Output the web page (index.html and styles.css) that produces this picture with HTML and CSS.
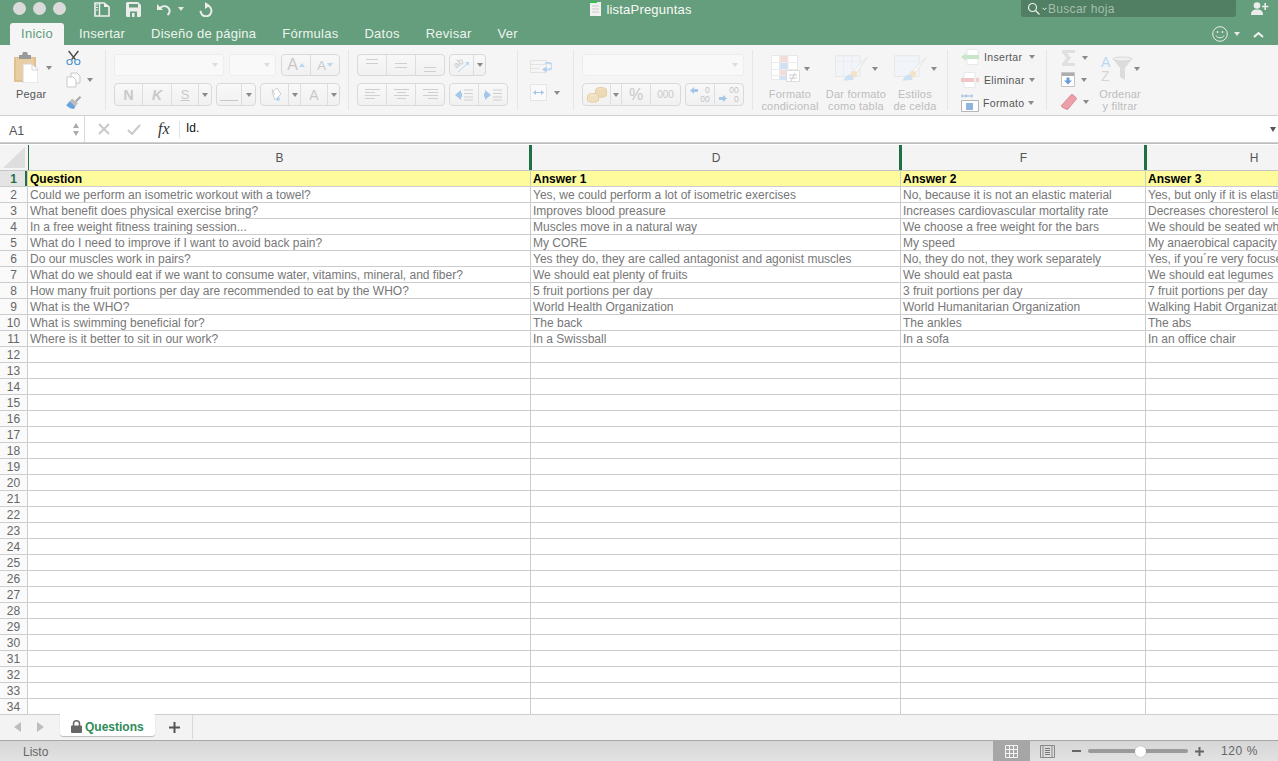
FILE: index.html
```html
<!DOCTYPE html>
<html lang="es">
<head>
<meta charset="utf-8">
<title>listaPreguntas</title>
<link rel="stylesheet" href="styles.css">
</head>
<body>
<div class="app">
  <header class="titlebar">
    <div class="tb-top">
      <div class="tb-left">
        <span class="light"></span><span class="light"></span><span class="light"></span>
        <svg class="qa qa-doc" width="16" height="15" viewBox="0 0 16 15"><path d="M1 1h9l5 4v9H1z" fill="none" stroke="#f0f0f0" stroke-width="1.6"/><path d="M5.500 1v13" stroke="#f0f0f0" stroke-width="1.400"/><path d="M10 1v4h5z" fill="#f0f0f0"/><path d="M2 3h2M2 5.500h2M2 8h2" stroke="#f0f0f0"/></svg>
        <svg class="qa qa-save" width="15" height="15" viewBox="0 0 15 15"><path d="M1.500 0h10.500l3 3v10.500a1.500 1.500 0 0 1-1.500 1.500h-12a1.500 1.500 0 0 1-1.500-1.500v-12a1.500 1.500 0 0 1 1.500-1.500z" fill="#ececec"/><path d="M3 2h9v3.500H3z" fill="#659e7c"/><path d="M4 9.500h7V15H4z" fill="#659e7c"/><path d="M6 11h2.500v4H6z" fill="#ececec"/></svg>
        <svg class="qa qa-undo" width="16" height="13" viewBox="0 0 16 13"><path d="M1 1v6h6z" fill="#ececec"/><path d="M3.500 5.500c2.500-2.500 6-3 8.500-1 2.500 2.200 2 5.500-.5 7.500" fill="none" stroke="#ececec" stroke-width="2"/></svg>
        <span class="caret caret-light qa-caret"></span>
        <svg class="qa qa-redo" width="14" height="15" viewBox="0 0 14 15"><path d="M6 0l5 3.500-5 3.500z" fill="#ececec"/><path d="M7 3.300a5.500 5.500 0 1 1-5.500 5.500" fill="none" stroke="#ececec" stroke-width="2"/></svg>
      </div>
      <div class="tb-title">
        <svg width="11" height="15" viewBox="0 0 11 15"><path d="M0 1h11v14H0z" fill="#f1f1f1"/><path d="M0 0h7v2H0z" fill="#2fbf4a"/><path d="M2 5h7M2 8h7M2 11h7" stroke="#c9c9c9"/></svg>
        <span>listaPreguntas</span>
      </div>
      <div class="tb-right">
        <div class="search">
          <svg width="13" height="13" viewBox="0 0 13 13"><circle cx="5.500" cy="5.500" r="4" fill="none" stroke="#f0f0f0" stroke-width="1.200"/><path d="M8.500 8.500l4 4" stroke="#f0f0f0" stroke-width="1.300"/></svg>
          <svg class="search-chev" width="5" height="4" viewBox="0 0 5 4"><path d="M.5 .8l2 2 2-2" fill="none" stroke="#f0f0f0"/></svg>
          <span>Buscar hoja</span>
        </div>
        <svg class="person" width="18" height="13" viewBox="0 0 18 13"><circle cx="6" cy="3.500" r="3.300" fill="#ececec"/><path d="M0 13c0-4 2-5.500 6-5.500s6 1.500 6 5.500z" fill="#ececec"/><path d="M11 4.500h6.500M14.200 1v7" stroke="#ececec" stroke-width="1.600"/></svg>
      </div>
    </div>
    <nav class="tb-tabs">
      <span class="rtab rtab-active">Inicio</span>
      <span class="rtab rtab-ins">Insertar</span>
      <span class="rtab">Diseño de página</span>
      <span class="rtab">Fórmulas</span>
      <span class="rtab">Datos</span>
      <span class="rtab">Revisar</span>
      <span class="rtab">Ver</span>
      <span class="tabs-end">
        <svg width="16" height="16" viewBox="0 0 16 16"><circle cx="8" cy="8" r="7.300" fill="none" stroke="#ececec" stroke-width="1"/><circle cx="5.500" cy="6" r=".9" fill="#ececec"/><circle cx="10.500" cy="6" r=".9" fill="#ececec"/><path d="M4 9.500c1 3 7 3 8 0" fill="none" stroke="#ececec"/></svg>
        <span class="caret caret-light smile-caret"></span>
        <svg class="chev-up" width="11" height="7" viewBox="0 0 11 7"><path d="M1 6l4.500-4 4.500 4" fill="none" stroke="#f4f4f4" stroke-width="2"/></svg>
      </span>
    </nav>
  </header>

  <section class="ribbon">
    <div class="grp g-paste">
      <div class="paste">
        <div class="paste-icon">
          <svg width="24" height="31" viewBox="0 0 24 31"><path d="M0 5h22v25H0z" fill="#e3c08f"/><path d="M2 6h18v22H2z" fill="#e9cda3"/><path d="M5 3h3l1-3h4l1 3h3v4H5z" fill="#9a9a9a"/><path d="M9 12h9l6 6v13H9z" fill="#fff" stroke="#d5d5d5"/><path d="M18 12v6h6" fill="none" stroke="#d5d5d5"/></svg>
          <span class="caret"></span>
        </div>
        <span class="paste-label">Pegar</span>
      </div>
      <div class="clip">
        <svg width="15" height="16" viewBox="0 0 15 16"><path d="M2.500 1l7 9M12.500 1l-7 9" stroke="#4a4a4a" stroke-width="1.500"/><circle cx="3.500" cy="12.500" r="2.700" fill="none" stroke="#4f93d2" stroke-width="1.200"/><circle cx="11.500" cy="12.500" r="2.700" fill="none" stroke="#4f93d2" stroke-width="1.200"/></svg>
        <span class="clip-copy"><svg width="15" height="16" viewBox="0 0 15 16"><path d="M5 1h6l3 3v7H5z" fill="#fafafa" stroke="#c9c9c9"/><path d="M1 5h6l3 3v7H1z" fill="#fff" stroke="#c9c9c9"/></svg><span class="caret"></span></span>
        <svg width="16" height="15" viewBox="0 0 16 15"><path d="M9 6l5-5 1.500 1.500-5 5z" fill="#a8a8a8"/><path d="M6 3.500l6 5-2.500 3-6-5z" fill="#bdbdbd"/><path d="M3.500 6.500l6 5-1.500 3c-3 0-6-1.500-8-4z" fill="#6aa3dc"/></svg>
      </div>
    </div>

    <div class="grp g-font">
      <div class="rw">
        <div class="field f-font"><span class="caret caret-pale"></span></div>
        <div class="field f-size"><span class="caret caret-pale"></span></div>
        <div class="seg">
          <span class="cell w-29 big-a">A<i class="tri-up"></i></span>
          <span class="cell w-28 small-a">A<i class="tri-down"></i></span>
        </div>
      </div>
      <div class="rw">
        <div class="seg">
          <span class="cell w-28 ltr ltr-n">N</span>
          <span class="cell w-29 ltr ltr-k">K</span>
          <span class="cell w-27 ltr ltr-s">S</span>
          <span class="cell w-12"><span class="caret"></span></span>
        </div>
        <div class="seg">
          <span class="cell w-25"><i class="border-ic"></i></span>
          <span class="cell w-13"><span class="caret"></span></span>
        </div>
        <div class="seg">
          <span class="cell w-28">
            <svg width="14" height="15" viewBox="0 0 14 15"><path d="M4 5l5-4 4 6-6 6z" fill="#fff" stroke="#cfcfcf"/><path d="M4 2l3 6" stroke="#cfcfcf"/><circle cx="10" cy="12" r="2" fill="#b9d4ee"/></svg>
          </span>
          <span class="cell w-12"><span class="caret"></span></span>
          <span class="cell w-27 font-a">A</span>
          <span class="cell w-11"><span class="caret"></span></span>
        </div>
      </div>
    </div>

    <div class="grp g-align">
      <div class="rw">
        <div class="seg">
          <span class="cell w-29"><i class="lines lines-top"></i></span>
          <span class="cell w-29"><i class="lines lines-mid"></i></span>
          <span class="cell w-28"><i class="lines lines-bot"></i></span>
        </div>
        <div class="seg">
          <span class="cell w-24">
            <svg class="over" width="17" height="15" viewBox="0 0 17 15"><text class="ab" x="2" y="9" transform="rotate(-40 5 8)">ab</text><path d="M5 14l10-9" stroke="#b9d4ee"/><path d="M12 4h4v4z" fill="#b9d4ee"/></svg>
          </span>
          <span class="cell w-11"><span class="caret"></span></span>
        </div>
      </div>
      <div class="rw">
        <div class="seg">
          <span class="cell w-29"><svg class="ln" width="15" height="11" viewBox="0 0 15 11"><path d="M0 .5h15M0 3.500h10M0 6.500h15M0 9.500h10"/></svg></span>
          <span class="cell w-29"><svg class="ln" width="15" height="11" viewBox="0 0 15 11"><path d="M0 .5h15M3 3.500h9M0 6.500h15M3 9.500h9"/></svg></span>
          <span class="cell w-28"><svg class="ln" width="15" height="11" viewBox="0 0 15 11"><path d="M0 .5h15M5 3.500h10M0 6.500h15M5 9.500h10"/></svg></span>
        </div>
        <div class="seg">
          <span class="cell w-29"><svg width="18" height="12" viewBox="0 0 18 12"><path d="M0 6l6-5v3h1v4H6v3z" fill="#a5c8ea"/><path d="M9 1h9M9 4.500h9M9 8h9M9 11h9" stroke="#cfcfcf"/></svg></span>
          <span class="cell w-28"><svg width="18" height="12" viewBox="0 0 18 12"><path d="M7 6L1 1v3H0v4h1v3z" fill="#a5c8ea"/><path d="M9 1h9M9 4.500h9M9 8h9M9 11h9" stroke="#cfcfcf"/></svg></span>
        </div>
      </div>
    </div>

    <div class="grp g-wrap">
      <svg class="wrap-ic" width="22" height="13" viewBox="0 0 22 13"><path d="M.5.500h16v12H.5zM.5 4.500h16M.5 8.500h9" fill="none" stroke="#e2e2e2"/><path d="M15 3h4a2.500 2.500 0 0 1 0 6.500h-3" fill="none" stroke="#bfd8f0" stroke-width="2"/><path d="M12 9.500l4.500-3v6z" fill="#b0cfec"/></svg>
      <div class="merge">
        <svg width="17" height="17" viewBox="0 0 17 17"><path d="M.5.500h16v16H.5z" fill="#fafafa" stroke="#e4e4e4"/><path d="M3 8.500h11" stroke="#a5c8ea"/><path d="M3 8.500l3-2.500v5zM14 8.500l-3-2.500v5z" fill="#a5c8ea"/></svg>
        <span class="caret"></span>
      </div>
    </div>

    <div class="grp g-num">
      <div class="rw">
        <div class="field f-num"><span class="caret caret-pale"></span></div>
      </div>
      <div class="rw">
        <div class="seg">
          <span class="cell w-28"><svg width="20" height="16" viewBox="0 0 20 16"><ellipse cx="14" cy="3" rx="5.500" ry="2.500" fill="#f0e0c0" stroke="#e2cfa6"/><path d="M8.500 3v5c0 3 11 3 11 0V3" fill="#eddab4" stroke="#e2cfa6"/><ellipse cx="6" cy="9" rx="5.500" ry="2.500" fill="#f3e5ca" stroke="#e2cfa6"/><path d="M.5 9v4c0 3 11 3 11 0V9" fill="#f0e0c0" stroke="#e2cfa6"/></svg></span>
          <span class="cell w-11"><span class="caret"></span></span>
          <span class="cell w-29 pct">%</span>
          <span class="cell w-29 thou">000</span>
        </div>
        <div class="seg">
          <span class="cell w-29 dec">
            <svg class="dec-top" width="8" height="7" viewBox="0 0 8 7"><path d="M0 3.500L4 0v2h4v3H4v2z" fill="#a5c8ea"/></svg>
            <b>0<br>00</b>
          </span>
          <span class="cell w-28 dec">
            <svg class="dec-bot" width="8" height="7" viewBox="0 0 8 7"><path d="M8 3.500L4 0v2H0v3h4v2z" fill="#a5c8ea"/></svg>
            <b>00<br>0</b>
          </span>
        </div>
      </div>
    </div>

    <div class="grp g-styles">
      <div class="style s-cond">
        <div class="style-ic">
          <svg width="29" height="27" viewBox="0 0 29 27"><path d="M.5.500h26v24H.5z" fill="#fff" stroke="#e8e8e8"/><path d="M8 1h9v6H8z" fill="#f5dada"/><path d="M8 7h9v7H8z" fill="#cfe1f3"/><path d="M8 14h19v6H8z" fill="#f5dada"/><path d="M8 20h9v5H8z" fill="#cfe1f3"/><path d="M.5 7.500h26M.5 14.500h26M.5 20.500h26M9 .5v24M17 .5v24" fill="none" stroke="#ececec"/><path d="M15.500 15.500h13v11h-13z" fill="#fff" stroke="#dcdcdc"/><path d="M18 20h8M18 23h8M24 18l-4 8" stroke="#cbcbcb"/></svg>
          <span class="caret"></span>
        </div>
        <span class="style-lb">Formato<br>condicional</span>
      </div>
      <div class="style s-tab">
        <div class="style-ic">
          <svg width="33" height="27" viewBox="0 0 35 28"><path d="M.5.500h26v22H.5z" fill="#f1f5fa" stroke="#e6e6e6"/><path d="M.5 6.500h26M9 .5v22M18 .5v22" fill="none" stroke="#ececec"/><path d="M34 2L20 16l3 3z" fill="#f8f8f8" stroke="#e4e4e4"/><circle cx="20" cy="20" r="3.500" fill="#f3e3c9"/><path d="M9 27c2-5 5-7 9-6l2 5z" fill="#cde0f4"/></svg>
          <span class="caret"></span>
        </div>
        <span class="style-lb">Dar formato<br>como tabla</span>
      </div>
      <div class="style s-cel">
        <div class="style-ic">
          <svg width="33" height="27" viewBox="0 0 35 28"><path d="M.5.500h26v22H.5z" fill="#f1f5fa" stroke="#e6e6e6"/><path d="M.5 6.500h26" fill="none" stroke="#ececec"/><path d="M34 2L20 16l3 3z" fill="#f8f8f8" stroke="#e4e4e4"/><circle cx="20" cy="20" r="3.500" fill="#f3e3c9"/><path d="M9 27c2-5 5-7 9-6l2 5z" fill="#cde0f4"/></svg>
          <span class="caret"></span>
        </div>
        <span class="style-lb">Estilos<br>de celda</span>
      </div>
    </div>

    <div class="grp g-cells">
      <div class="cellrow">
        <svg width="19" height="16" viewBox="0 0 19 16"><path d="M6 .5h11v15H6z" fill="#fff" stroke="#e8e8e8"/><path d="M0 8l5-4v2h13v4H5v2z" fill="#c8e6c8"/></svg>
        <span class="cell-lb">Insertar</span><span class="caret"></span>
      </div>
      <div class="cellrow">
        <svg width="19" height="16" viewBox="0 0 19 16"><path d="M3 .5h11v15H3z" fill="#fff" stroke="#e8e8e8"/><path d="M0 6h13v4H0z" fill="#f0c6c6"/><path d="M15 6l3 4M18 6l-3 4" stroke="#f0c6c6" stroke-width="1.300"/></svg>
        <span class="cell-lb">Eliminar</span><span class="caret"></span>
      </div>
      <div class="cellrow">
        <svg class="fmt-ic" width="18" height="18" viewBox="0 0 18 18"><path d="M.5 6.500h17v11H.5z" fill="#fff" stroke="#b5b5b5"/><path d="M5 9h7v7H5z" fill="#8fb5de"/><path d="M1 2h10M1 .5v3M11 .5v3M5 .5v3" stroke="#8fb5de"/></svg>
        <span class="cell-lb">Formato</span><span class="caret"></span>
      </div>
    </div>

    <div class="grp g-edit">
      <div class="edit-col">
        <span class="edit-it"><svg width="15" height="16" viewBox="0 0 15 16"><path d="M1 0h13v3H6l4 5-4 5h8v3H1v-2.500L5.500 8 1 2.500z" fill="#e0e0e0"/></svg><span class="caret"></span></span>
        <span class="edit-it"><svg width="14" height="15" viewBox="0 0 14 15"><path d="M.5.500h13v14H.5z" fill="#fff" stroke="#c4c4c4"/><path d="M1 1h12v3H1z" fill="#aeaeae"/><path d="M5.500 5.500h3v3H11l-4 4-4-4h2.500z" fill="#6a9cdb"/></svg><span class="caret"></span></span>
        <span class="edit-it"><svg width="16" height="16" viewBox="0 0 16 16"><path d="M1 11L10 1a1.500 1.500 0 0 1 2 0l3 2.500a1.500 1.500 0 0 1 0 2L7 15a1.500 1.500 0 0 1-2 0L1 13a1.500 1.500 0 0 1 0-2z" fill="#eea0a8" stroke="#d98b94"/></svg><span class="caret"></span></span>
      </div>
      <div class="style s-sort">
        <div class="style-ic">
          <svg class="over" width="33" height="29" viewBox="0 0 33 29"><text class="az az-a" x="1" y="13">A</text><text class="az az-z" x="1" y="27">Z</text><path d="M13 5h19l-7 9v12l-5-3v-9z" fill="#dcdcdc"/><ellipse cx="22.500" cy="5" rx="9.500" ry="2" fill="#f0f0f0" stroke="#d8d8d8"/></svg>
          <span class="caret"></span>
        </div>
        <span class="style-lb">Ordenar<br>y filtrar</span>
      </div>
    </div>
  </section>

  <section class="formula">
    <div class="namebox">
      <span class="name-val">A1</span>
      <span class="stepper"><i class="st-up"></i><i class="st-down"></i></span>
    </div>
    <div class="fbtns">
      <svg width="12" height="12" viewBox="0 0 12 12"><path d="M1 1l10 10M11 1L1 11" stroke="#c9c9c9" stroke-width="2"/></svg>
      <svg width="14" height="11" viewBox="0 0 14 11"><path d="M1 6l4 4 8-9" fill="none" stroke="#c9c9c9" stroke-width="2"/></svg>
      <span class="fx">fx</span>
    </div>
    <div class="fvalue">Id.</div>
    <span class="fdrop"></span>
  </section>

  <main class="sheet">
    <table class="grid">
      <colgroup><col class="c-num"><col class="c-b"><col class="c-d"><col class="c-f"><col class="c-h"></colgroup>
      <thead>
        <tr><th class="corner"><span class="corner-tri"></span></th><th>B</th><th>D</th><th>F</th><th>H</th></tr>
      </thead>
      <tbody>
        <tr class="head"><td class="num">1</td><td>Question</td><td>Answer 1</td><td>Answer 2</td><td>Answer 3</td></tr>
        <tr><td class="num">2</td><td>Could we perform an isometric workout with a towel?</td><td>Yes, we could perform a lot of isometric exercises</td><td>No, because it is not an elastic material</td><td>Yes, but only if it is elastic</td></tr>
        <tr><td class="num">3</td><td>What benefit does physical exercise bring?</td><td>Improves blood preasure</td><td>Increases cardiovascular mortality rate</td><td>Decreases choresterol levels</td></tr>
        <tr><td class="num">4</td><td>In a free weight fitness training session...</td><td>Muscles move in a natural way</td><td>We choose a free weight for the bars</td><td>We should be seated while</td></tr>
        <tr><td class="num">5</td><td>What do I need to improve if I want to avoid back pain?</td><td>My CORE</td><td>My speed</td><td>My anaerobical capacity</td></tr>
        <tr><td class="num">6</td><td>Do our muscles work in pairs?</td><td>Yes they do, they are called antagonist and agonist muscles</td><td>No, they do not, they work separately</td><td>Yes, if you´re very focused</td></tr>
        <tr><td class="num">7</td><td>What do we should eat if we want to consume water, vitamins, mineral, and fiber?</td><td>We should eat plenty of fruits</td><td>We should eat pasta</td><td>We should eat legumes</td></tr>
        <tr><td class="num">8</td><td>How many fruit portions per day are recommended to eat by the WHO?</td><td>5 fruit portions per day</td><td>3 fruit portions per day</td><td>7 fruit portions per day</td></tr>
        <tr><td class="num">9</td><td>What is the WHO?</td><td>World Health Organization</td><td>World Humanitarian Organization</td><td>Walking Habit Organization</td></tr>
        <tr><td class="num">10</td><td>What is swimming beneficial for?</td><td>The back</td><td>The ankles</td><td>The abs</td></tr>
        <tr><td class="num">11</td><td>Where is it better to sit in our work?</td><td>In a Swissball</td><td>In a sofa</td><td>In an office chair</td></tr>
        <tr><td class="num">12</td><td></td><td></td><td></td><td></td></tr>
        <tr><td class="num">13</td><td></td><td></td><td></td><td></td></tr>
        <tr><td class="num">14</td><td></td><td></td><td></td><td></td></tr>
        <tr><td class="num">15</td><td></td><td></td><td></td><td></td></tr>
        <tr><td class="num">16</td><td></td><td></td><td></td><td></td></tr>
        <tr><td class="num">17</td><td></td><td></td><td></td><td></td></tr>
        <tr><td class="num">18</td><td></td><td></td><td></td><td></td></tr>
        <tr><td class="num">19</td><td></td><td></td><td></td><td></td></tr>
        <tr><td class="num">20</td><td></td><td></td><td></td><td></td></tr>
        <tr><td class="num">21</td><td></td><td></td><td></td><td></td></tr>
        <tr><td class="num">22</td><td></td><td></td><td></td><td></td></tr>
        <tr><td class="num">23</td><td></td><td></td><td></td><td></td></tr>
        <tr><td class="num">24</td><td></td><td></td><td></td><td></td></tr>
        <tr><td class="num">25</td><td></td><td></td><td></td><td></td></tr>
        <tr><td class="num">26</td><td></td><td></td><td></td><td></td></tr>
        <tr><td class="num">27</td><td></td><td></td><td></td><td></td></tr>
        <tr><td class="num">28</td><td></td><td></td><td></td><td></td></tr>
        <tr><td class="num">29</td><td></td><td></td><td></td><td></td></tr>
        <tr><td class="num">30</td><td></td><td></td><td></td><td></td></tr>
        <tr><td class="num">31</td><td></td><td></td><td></td><td></td></tr>
        <tr><td class="num">32</td><td></td><td></td><td></td><td></td></tr>
        <tr><td class="num">33</td><td></td><td></td><td></td><td></td></tr>
        <tr><td class="num">34</td><td></td><td></td><td></td><td></td></tr>
      </tbody>
    </table>
  </main>

  <section class="sheetbar">
    <div class="nav-arrows"><i class="na na-l"></i><i class="na na-r"></i></div>
    <div class="sheet-tab">
      <svg width="11" height="13" viewBox="0 0 11 13"><path d="M2.500 6V3.800a3 3 0 0 1 6 0V6" fill="none" stroke="#666" stroke-width="1.500"/><path d="M1 5.500h9a1 1 0 0 1 1 1V12a1 1 0 0 1-1 1H1a1 1 0 0 1-1-1V6.500a1 1 0 0 1 1-1z" fill="#666"/></svg>
      <span>Questions</span>
    </div>
    <div class="add-sheet"><svg width="11" height="11" viewBox="0 0 11 11"><path d="M0 5.500h11M5.500 0v11" stroke="#555" stroke-width="2"/></svg></div>
  </section>

  <footer class="status">
    <span class="listo">Listo</span>
    <div class="view-btn">
      <svg width="13" height="13" viewBox="0 0 13 13"><path d="M.5.500h12v12H.5zM4.500.5v12M8.500.5v12M.5 4.500h12M.5 8.500h12" fill="none" stroke="#f4f4f4"/></svg>
    </div>
    <svg class="page-ic" width="15" height="13" viewBox="0 0 15 13"><path d="M.5.500h14v12H.5z" fill="none" stroke="#888"/><path d="M3 .5v12M12 .5v12" stroke="#888" fill="none"/><path d="M5 3.500h5M5 5.500h5M5 7.500h5M5 9.500h5" stroke="#777"/></svg>
    <svg class="zoom-m" width="9" height="2" viewBox="0 0 9 2"><path d="M0 1h9" stroke="#666" stroke-width="2"/></svg>
    <div class="slider"><span class="thumb"></span></div>
    <svg class="zoom-p" width="9" height="9" viewBox="0 0 9 9"><path d="M0 4.500h9M4.500 0v9" stroke="#666" stroke-width="2"/></svg>
    <span class="zoom-val">120 %</span>
  </footer>
</div>
</body>
</html>
```

FILE: styles.css
```css
* { box-sizing: border-box; }
html, body { margin: 0; padding: 0; height: 100%; overflow: hidden; }
body { font-family: "Liberation Sans", Arial, sans-serif; color: #444; background: #fff; }
i { font-style: normal; display: block; }

.app { display: flex; flex-direction: column; height: 761px; width: 1278px; overflow: hidden; }

/* Title bar */
.titlebar { height: 45px; background: #659e7c; color: #fff; flex: none; }
.tb-top { height: 23px; display: flex; }
.tb-left { flex: 1; display: flex; align-items: flex-start; padding: 2px 0 0 13px; }
.light { width: 13px; height: 13px; border-radius: 50%; background: #dadada; margin-right: 7px; flex: none; }
.qa { flex: none; }
.qa-doc { margin-left: 21px; }
.qa-save { margin-left: 16px; }
.qa-undo { margin-left: 15px; margin-top: 1px; }
.qa-caret { margin-left: 6px; margin-top: 5px; }
.qa-redo { margin-left: 15px; }
.tb-title { display: flex; align-items: flex-start; gap: 5px; font-size: 13px; line-height: 18px; padding-top: 1px; letter-spacing: .2px; color: #fafafa; }
.tb-right { flex: 1; display: flex; justify-content: flex-end; align-items: flex-start; padding-right: 9px; }
.search { width: 215px; height: 17px; background: #507f63; border-radius: 0 0 3px 3px; display: flex; align-items: center; padding-left: 6px; font-size: 12px; color: #a3c0ae; letter-spacing: .3px; }
.search-chev { margin: 0 1px 0 2px; }
.person { margin: 2px 0 0 15px; }

.tb-tabs { height: 22px; display: flex; align-items: stretch; font-size: 13px; letter-spacing: .25px; gap: 26px; }
.rtab { line-height: 22px; color: #eef4f0; flex: none; }
.rtab-active { margin-left: 10px; width: 54px; background: #f5f5f5; color: #5f9c78; text-align: center; border-radius: 3px 3px 0 0; }
.rtab-ins { margin-left: -11px; }
.tabs-end { margin-left: auto; display: flex; align-items: center; padding-right: 14px; }
.smile-caret { margin-left: 6px; }
.chev-up { margin-left: 13px; }

.caret { display: inline-block; width: 0; height: 0; border-left: 3px solid transparent; border-right: 3px solid transparent; border-top: 4px solid #8a8a8a; flex: none; }
.caret-light { border-top-color: #e8e8e8; }
.caret-pale { border-top-color: #dcdcdc; }
.over { overflow: visible; }

/* Ribbon */
.ribbon { height: 71px; flex: none; background: #f5f5f5; border-bottom: 1px solid #cfcfcf; display: flex; }
.grp { flex: none; margin-top: 5px; height: 60px; border-right: 1px solid #e6e6e6; }
.g-paste { width: 106px; display: flex; }
.paste { width: 64px; padding: 2px 0 0 14px; }
.paste-icon { display: flex; align-items: center; gap: 8px; height: 31px; }
.paste-label { display: block; font-size: 11px; margin: 5px 0 0 2px; color: #555; letter-spacing: .2px; }
.clip { padding-left: 2px; display: flex; flex-direction: column; gap: 7px; }
.clip-copy { display: flex; align-items: center; gap: 6px; }

.g-font { width: 243px; padding: 4px 0 0 8px; }
.g-align { width: 169px; padding: 4px 0 0 8px; }
.g-wrap { width: 56px; padding: 10px 0 0 12px; }
.g-num { width: 179px; padding: 4px 0 0 8px; }
.g-styles { width: 195px; display: flex; }
.g-cells { width: 99px; padding-left: 13px; display: flex; flex-direction: column; gap: 7px; }
.g-edit { width: 150px; border-right: 0; display: flex; padding-left: 14px; }

.rw { display: flex; gap: 4px; height: 23px; margin-bottom: 6px; }
.rw + .rw { margin-bottom: 0; }
.field { height: 22px; border: 1px solid #ededed; border-radius: 3px; background: #f9f9f9; display: flex; justify-content: flex-end; align-items: center; padding-right: 5px; }
.f-font { width: 110px; margin-right: 1px; }
.f-size { width: 47px; margin-right: 1px; }
.f-num { width: 162px; }
.seg { display: flex; height: 23px; border: 1px solid #d9d9d9; border-radius: 4px; background: linear-gradient(#f8f8f8, #f1f1f1); }
.rw:first-child .seg { height: 22px; }
.cell { display: flex; align-items: center; justify-content: center; border-right: 1px solid #dedede; flex: none; color: #c8c8c8; }
.cell:last-child { border-right: 0; }
.w-11 { width: 11px; } .w-12 { width: 12px; } .w-13 { width: 13px; } .w-24 { width: 24px; } .w-25 { width: 25px; }
.w-27 { width: 27px; } .w-28 { width: 28px; } .w-29 { width: 29px; }
.big-a { font-size: 16px; gap: 1px; }
.small-a { font-size: 13px; gap: 1px; }
.tri-up { width: 0; height: 0; border-left: 3px solid transparent; border-right: 3px solid transparent; border-bottom: 4px solid #bcd7f0; }
.tri-down { width: 0; height: 0; border-left: 3px solid transparent; border-right: 3px solid transparent; border-top: 4px solid #bcd7f0; }
.ltr { font-size: 14px; }
.ltr-n { font-weight: bold; }
.ltr-k { font-weight: bold; font-style: italic; }
.ltr-s { text-decoration: underline; font-size: 13px; }
.border-ic { width: 18px; height: 1px; background: #c8c8c8; margin-top: 12px; }
.font-a { font-size: 14px; }
.lines { width: 12px; height: 5px; border-top: 1px solid #cfcfcf; border-bottom: 1px solid #cfcfcf; }
.lines-top { margin-bottom: 8px; }
.lines-bot { margin-top: 8px; }
.ln { fill: none; stroke: #cfcfcf; }
.ab { font-size: 9px; fill: #c4c4c4; font-family: "Liberation Sans", sans-serif; }
.wrap-ic { display: block; }
.merge { display: flex; align-items: center; gap: 7px; margin-top: 11px; }
.pct { font-size: 16px; }
.thou { font-size: 10px; }
.dec { gap: 2px; }
.dec b { font-weight: normal; font-size: 8.500px; line-height: 9px; text-align: right; color: #c4c4c4; }
.dec-top { align-self: flex-start; margin-top: 3px; }
.dec-bot { align-self: flex-end; margin-bottom: 3px; }

.style { display: flex; flex-direction: column; align-items: center; flex: none; padding-top: 4px; }
.style-ic { display: flex; align-items: center; gap: 4px; height: 29px; flex: none; }
.style-lb { margin-top: 5px; font-size: 11px; line-height: 12px; color: #bdbdbd; text-align: center; letter-spacing: .2px; white-space: nowrap; flex: none; }
.s-cond { width: 74px; }
.s-tab { width: 58px; }
.s-cel { width: 60px; }

.cellrow { display: flex; align-items: center; gap: 4px; height: 16px; font-size: 10.500px; color: #555; letter-spacing: .35px; }
.cellrow:first-child { margin-top: -1px; }
.cell-lb { width: 41px; white-space: nowrap; }

.edit-col { width: 36px; display: flex; flex-direction: column; gap: 7px; }
.edit-it { display: flex; align-items: center; gap: 6px; height: 15px; }
.s-sort { width: 40px; margin-left: 3px; }
.s-sort .style-ic { gap: 1px; }
.az { font-size: 14px; font-family: "Liberation Sans", sans-serif; }
.az-a { fill: #bcd7f0; }
.az-z { fill: #d6d6d6; }

/* Formula bar */
.formula { height: 27px; flex: none; background: #fff; display: flex; align-items: center; border-bottom: 1px solid #cfcfcf; }
.namebox { width: 85px; height: 100%; border-right: 1px solid #d8d8d8; display: flex; align-items: center; justify-content: space-between; padding: 0 5px 0 9px; font-size: 12.500px; color: #555; }
.name-val { margin-top: 3px; }
.stepper { display: flex; flex-direction: column; gap: 3px; }
.st-up { width: 0; height: 0; border-left: 3.500px solid transparent; border-right: 3.500px solid transparent; border-bottom: 5px solid #aaa; }
.st-down { width: 0; height: 0; border-left: 3.500px solid transparent; border-right: 3.500px solid transparent; border-top: 5px solid #aaa; }
.fbtns { display: flex; align-items: center; padding-left: 13px; width: 95px; height: 17px; border-right: 1px solid #e2e2e2; }
.fbtns svg:nth-child(2) { margin-left: 17px; }
.fx { margin-left: 17px; font-family: "Liberation Serif", serif; font-style: italic; font-size: 16px; color: #333; }
.fvalue { padding-left: 6px; font-size: 12px; color: #111; margin-top: -3px; flex: 1; }
.fdrop { width: 0; height: 0; margin-right: 2px; border-left: 3.500px solid transparent; border-right: 3.500px solid transparent; border-top: 5px solid #555; }

/* Sheet */
.sheet { height: 571px; flex: none; overflow: hidden; border-top: 1px solid #bdbdbd; padding-top: 1px; }
.grid { border-collapse: separate; border-spacing: 0; table-layout: fixed; width: 1362px; font-size: 12px; }
.c-num { width: 28px; } .c-b { width: 503px; } .c-d { width: 370px; } .c-f { width: 245px; } .c-h { width: 216px; }
.grid th { height: 26px; background: #f4f4f4; border-bottom: 1px solid #c4c4c4; font-weight: normal; font-size: 12px; color: #555; padding: 0; box-shadow: inset -2px 0 0 #1f7145, inset 1px 0 0 #1f7145; }
.grid th.corner { box-shadow: none; vertical-align: bottom; }
.corner-tri { display: block; width: 0; height: 0; margin: 0 0 2px 3px; border-left: 22px solid transparent; border-bottom: 21px solid #dedede; }
.grid td { height: 16px; padding: 1px 2px 0; border-right: 1px solid #cdcdcd; border-bottom: 1px solid #cdcdcd; color: #777; white-space: nowrap; overflow: hidden; line-height: 14px; vertical-align: top; }
.grid td.num { text-align: center; background: #fafafa; color: #666; font-size: 12px; padding: 1px 0 0; }
.head td { background: #fdfb9c; color: #000; font-weight: bold; }
.head td.num { background: #e4e4e4; color: #1f7145; font-weight: bold; box-shadow: inset -2px 0 0 #1f7145; }

/* Sheet tabs */
.sheetbar { height: 26px; flex: none; background: #f3f3f3; border-top: 1px solid #cdcdcd; display: flex; align-items: flex-start; }
.nav-arrows { width: 60px; display: flex; gap: 16px; padding: 7px 0 0 14px; }
.na { width: 0; height: 0; border-top: 5px solid transparent; border-bottom: 5px solid transparent; }
.na-l { border-right: 7px solid #bdbdbd; }
.na-r { border-left: 7px solid #bdbdbd; }
.sheet-tab { width: 95px; height: 22px; margin-top: -1px; background: #fff; border-radius: 0 0 3px 3px; box-shadow: 0 1px 1px #bbb; display: flex; align-items: center; gap: 3px; padding: 3px 0 0 11px; font-size: 12px; font-weight: bold; color: #2e8b57; }
.add-sheet { width: 38px; height: 24px; border-right: 1px solid #d8d8d8; display: flex; align-items: center; justify-content: center; padding: 1px 0 0 1px; }

/* Status bar */
.status { height: 21px; flex: none; background: linear-gradient(#d6d6d6, #e2e2e2); border-top: 1px solid #a8a8a8; display: flex; align-items: center; font-size: 12px; color: #666; }
.listo { margin: 1px auto 0 23px; }
.view-btn { width: 37px; height: 100%; background: #a6a6a6; display: flex; align-items: center; justify-content: center; }
.page-ic { margin-left: 10px; }
.zoom-m { margin-left: 17px; }
.slider { width: 100px; height: 4px; border-radius: 2px; background: #9a9a9a; margin-left: 7px; display: flex; align-items: center; padding-left: 47px; }
.thumb { width: 11px; height: 11px; border-radius: 50%; background: #fff; box-shadow: 0 0 1px #888; flex: none; }
.zoom-p { margin-left: 7px; }
.zoom-val { margin-left: 17px; margin-right: 20px; font-size: 12px; letter-spacing: .6px; }
```
